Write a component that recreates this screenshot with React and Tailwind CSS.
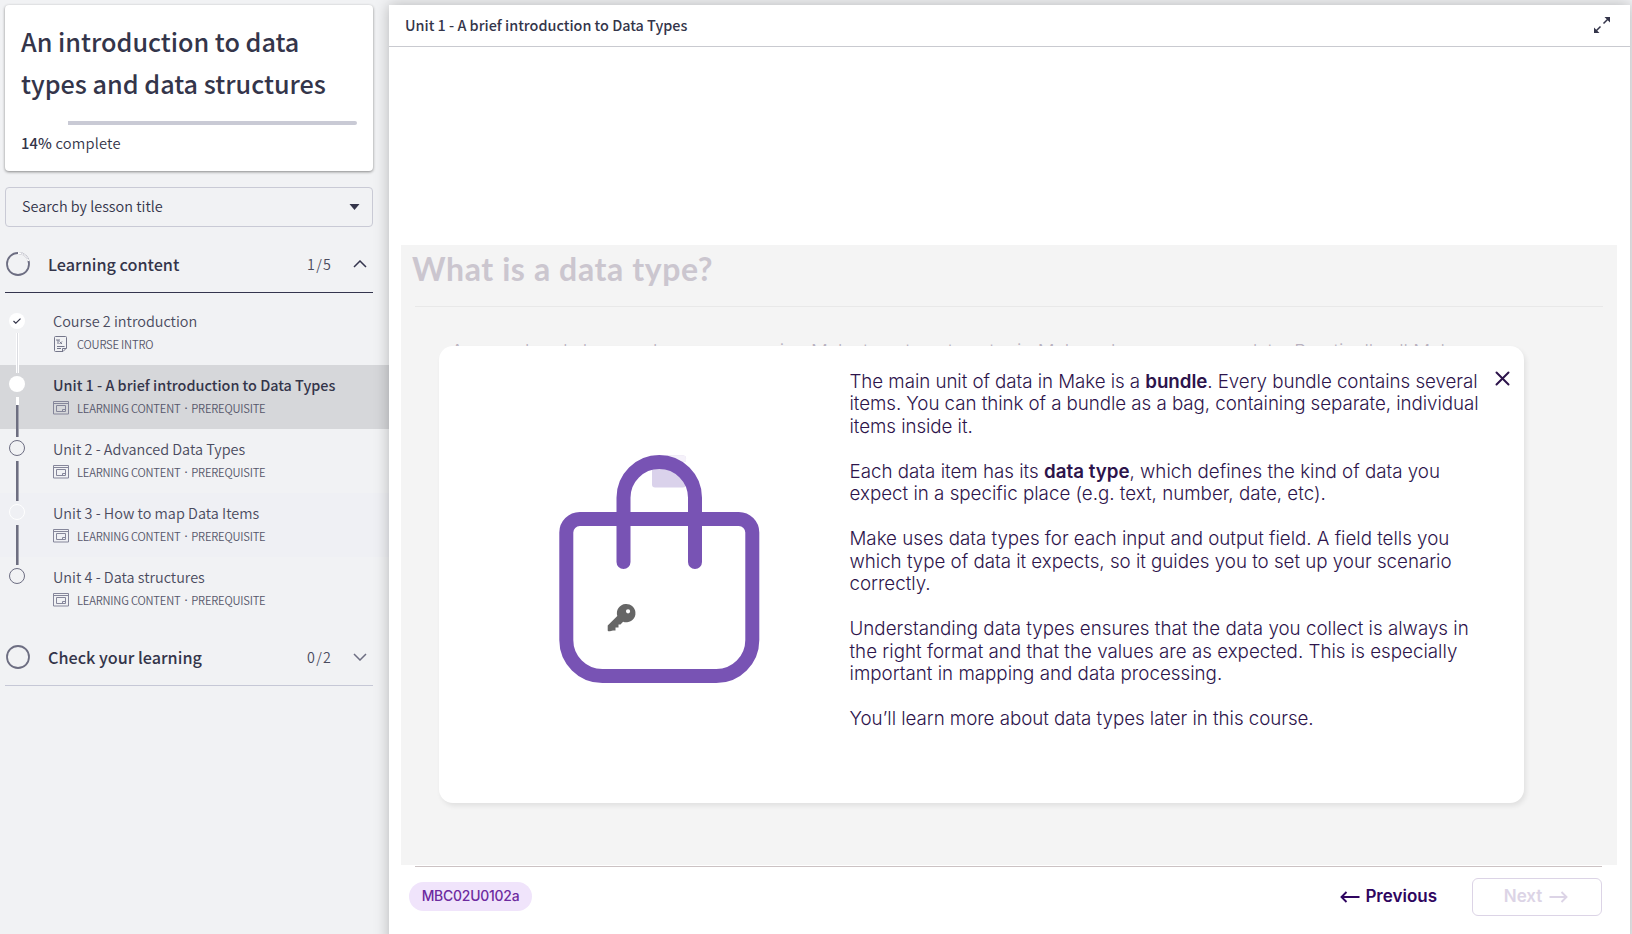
const LESSONS = [
  { title: 'Course 2 introduction', meta: ['COURSE INTRO'], state: 'done', line: 'white', icon: 'doc' },
  { title: 'Unit 1 - A brief introduction to Data Types', meta: ['LEARNING CONTENT', 'PREREQUISITE'], state: 'current', line: 'mixed', icon: 'window' },
  { title: 'Unit 2 - Advanced Data Types', meta: ['LEARNING CONTENT', 'PREREQUISITE'], state: 'open', line: 'grey', icon: 'window' },
  { title: 'Unit 3 - How to map Data Items', meta: ['LEARNING CONTENT', 'PREREQUISITE'], state: 'hover', line: 'grey', icon: 'window' },
  { title: 'Unit 4 - Data structures', meta: ['LEARNING CONTENT', 'PREREQUISITE'], state: 'open', line: 'none', icon: 'window' },
];

const ROW_BG = { done: '', current: 'bg-[#d6d7da]', open: '', hover: 'bg-[#eff0f4]' };
const DOT = {
  done: 'bg-white',
  current: 'bg-white',
  open: 'border border-[#6d6e82]',
  hover: 'border border-white',
};

function DocIcon() {
  return (
    <svg width="16" height="16" viewBox="0 0 16 16" fill="none" stroke="#75778b" strokeWidth="1">
      <path d="M2.500.5h10a1 1 0 0 1 1 1V12l-3.500 3.500H2.500a1 1 0 0 1-1-1v-13a1 1 0 0 1 1-1zM9.500 15.500V12.500h4" />
      <path d="M3 4h4M5 4v4M6.500 5.500l2.500 2.500M9 5.500L6.500 8M4 10.500h7.500M4 12.500h4" />
    </svg>
  );
}

function WindowIcon() {
  return (
    <svg width="16" height="14" viewBox="0 0 16 14" fill="none" stroke="#85869a" strokeWidth="1">
      <path d="M.5.5h15v12.500H.5zM.5 2.500h15M3.500 4.500h9v6h-9zM9.500 10.500v-2h3" />
    </svg>
  );
}

function Rail({ state, line }) {
  return (
    <div className={`relative z-10 flex w-[34px] shrink-0 flex-col items-center ${state === 'done' ? 'pt-3' : 'pt-[11px]'}`}>
      <div className={`flex size-4 shrink-0 items-center justify-center rounded-full ${DOT[state]}`}>
        {state === 'done' && (
          <svg width="8" height="6" viewBox="0 0 8 6" fill="none" stroke="#34354a" strokeWidth="1.200">
            <path d="M.5 3l2.300 2.200L7.500.6" />
          </svg>
        )}
      </div>
      {line === 'white' && <div className="mt-1 h-10 w-[3px] shrink-0 border-x border-white bg-[#dcdde2]" />}
      {line === 'mixed' && (
        <div className="mt-[5px] flex shrink-0 flex-col">
          <div className="h-2 w-[3px] bg-white" />
          <div className="h-8 w-[3px] border-r border-[#a4a5b1] bg-[#6d6e80]" />
        </div>
      )}
      {line === 'grey' && <div className="mt-[5px] h-10 w-[3px] shrink-0 border-r border-[#a4a5b1] bg-[#6d6e80]" />}
    </div>
  );
}

function Lesson({ title, meta, state, line, icon }) {
  return (
    <div className={`flex h-16 ${ROW_BG[state]}`}>
      <Rail state={state} line={line} />
      <div className="pl-[19px] pt-[9.500px]">
        <div
          className={
            state === 'current'
              ? 'text-[14.400px] leading-5 font-medium whitespace-nowrap'
              : 'text-[14.450px] leading-5 font-[350] whitespace-nowrap text-[#4a4b5e]'
          }
        >
          {title}
        </div>
        <div className="mt-[3.500px] flex h-5 items-center gap-2 text-[11.200px] font-[350] tracking-[-0.200px] text-[#55566a]">
          {icon === 'doc' ? <DocIcon /> : <WindowIcon />}
          <span className="flex gap-1 whitespace-nowrap">
            <span>{meta[0]}</span>
            {meta[1] && <span className="font-['Open_Sans',sans-serif] font-semibold">·</span>}
            {meta[1] && <span>{meta[1]}</span>}
          </span>
        </div>
      </div>
    </div>
  );
}

function Section({ label, count, open }) {
  return (
    <div className={`mx-[5px] flex h-14 items-center border-b pb-px ${open ? 'border-[#34354e]' : 'border-[#c6c8d6]'}`}>
      <svg className="ml-px" width="24" height="24" viewBox="0 0 24 24" fill="none" strokeWidth="1.800">
        <circle cx="12" cy="12" r="11" stroke="#6d6e82" />
        {open && <path d="M12 1A11 11 0 0 1 22.600 9" stroke="#fff" />}
        {open && <path d="M15 1.200A11.500 11.500 0 0 1 22.200 7.500" stroke="#b9bac6" strokeWidth=".6" />}
      </svg>
      <span className="ml-[18px] flex-1 text-[16.200px] leading-6 font-medium">{label}</span>
      <span className="mr-[21px] text-[14.300px] font-[350] tracking-[1.200px] text-[#4a4b5e]">{count}</span>
      <svg className="mr-[6px]" width="14" height="8" viewBox="0 0 14 8" fill="none" stroke={open ? '#34354e' : '#6d6e82'} strokeWidth="1.500">
        <path d={open ? 'M1 7l6-6 6 6' : 'M1 1l6 6 6-6'} />
      </svg>
    </div>
  );
}

function Sidebar() {
  return (
    <aside className="w-[389px] shrink-0 pt-[5px] text-[#34354a]">
      <div className="mx-[5px] mr-4 h-[166px] rounded bg-white px-4 pt-[15px] shadow-[0_1px_3px_rgba(0,0,0,0.450)]">
        <h1 className="text-[25.200px] leading-[42px] font-medium whitespace-nowrap">
          An introduction to data
          <br />
          types and data structures
        </h1>
        <div className="mt-[17px] flex h-1 justify-end">
          <div className="w-[289px] rounded-r-sm bg-[#c9cad5]" />
        </div>
        <p className="mt-[7.500px] text-[14.700px] leading-5 font-[350] tracking-[0.180px]">
          <span className="font-medium">14%</span> complete
        </p>
      </div>
      <div className="mr-4 ml-[5px] mt-4 flex h-10 items-center justify-between rounded border border-[#c9cad5] pr-3 pl-4 text-[14.450px] font-[350]">
        <span className="-mt-0.5">Search by lesson title</span>
        <svg width="11" height="6" viewBox="0 0 11 6" fill="#34354a">
          <path d="M.5 0h10L5.500 6z" />
        </svg>
      </div>
      <div className="mt-[10px] mr-[11px]">
        <Section label="Learning content" count="1/5" open />
      </div>
      <div className="pt-2">
        {LESSONS.map((l) => (
          <Lesson key={l.title} {...l} />
        ))}
      </div>
      <div className="mt-[9px] mr-[11px]">
        <Section label="Check your learning" count="0/2" />
      </div>
    </aside>
  );
}

function Bag() {
  return (
    <svg width="203" height="230" viewBox="0 0 203 230" fill="none">
      <rect x="94" y="1.500" width="34" height="32" rx="3" fill="#dad2eb" />
      <path d="M94 4.500a3 3 0 0 1 3-3h28a3 3 0 0 1 3 3v3h-34z" fill="#f5f1fa" />
      <path d="M118 7.500h10.500V20z" fill="#fff" />
      <path d="M21.800 65h159A13.500 13.500 0 0 1 194.300 78.500V186a36 36 0 0 1-36 36H44.300A36 36 0 0 1 8.300 186V78.500A13.500 13.500 0 0 1 21.800 65z" stroke="#7853b4" strokeWidth="14" />
      <path d="M65.500 108V43.750a35.750 35.750 0 0 1 71.500 0V108" stroke="#7853b4" strokeWidth="14" strokeLinecap="round" />
      <path
        fillRule="evenodd"
        fill="#666"
        d="M67.500 150a9.200 9.200 0 1 1-2.400 17.800l-2.600 2.700h-2v3h-3v3h-2.500L52 177.300H50.500a1 1 0 0 1-.8-1v-4.800l9.600-9.500A9.200 9.200 0 0 1 67.500 150zM70 155.200a2.100 2.100 0 1 0 .1 4.200 2.100 2.100 0 0 0-.1-4.200z"
      />
    </svg>
  );
}

function Card() {
  return (
    <div className="relative z-10 ml-[38px] flex h-[457px] w-[1085px] rounded-[14px] bg-white pt-[24px] shadow-[2px_3px_5px_rgba(0,0,0,0.080)]">
      <div className="w-[410.500px] shrink-0 pt-[83.500px] pl-[119px]">
        <Bag />
      </div>
      <div className="flex-1 pt-[0.800px] text-[18.750px] leading-[22.500px] font-light whitespace-nowrap text-[#2d144b]">
        <p className="tracking-[-0.060px]">
          The main unit of data in Make is a <b className="font-semibold">bundle</b>. Every bundle contains several
          <br />
          items. You can think of a bundle as a bag, containing separate, individual
          <br />
          items inside it.
        </p>
        <p className="mt-[22.500px]">
          Each data item has its <b className="font-semibold">data type</b>, which defines the kind of data you
          <br />
          expect in a specific place (e.g. text, number, date, etc).
        </p>
        <p className="mt-[22.500px] tracking-[-0.020px]">
          Make uses data types for each input and output field. A field tells you
          <br />
          which type of data it expects, so it guides you to set up your scenario
          <br />
          correctly.
        </p>
        <p className="mt-[22.500px] tracking-[0.010px]">
          Understanding data types ensures that the data you collect is always in
          <br />
          the right format and that the values are as expected. This is especially
          <br />
          important in mapping and data processing.
        </p>
        <p className="mt-[22.500px] tracking-[-0.050px]">You’ll learn more about data types later in this course.</p>
      </div>
      <svg className="mt-[1px] mr-[14px]" width="15" height="15" viewBox="0 0 15 15" fill="none" stroke="#2d144b" strokeWidth="2" strokeLinecap="round">
        <path d="M1.500 1.500l12 12M13.500 1.500l-12 12" />
      </svg>
    </div>
  );
}

function Slide() {
  return (
    <div className="mt-[198px] ml-3 h-[620px] w-[1216px] bg-[#f4f4f4] font-[Inter,sans-serif]">
      <h2 className="h-[61px] pt-1 pl-[11px] font-[Lato,sans-serif] text-[32px] leading-10 font-bold tracking-[0.600px] text-[#cbc6cf]">
        What is a data type?
      </h2>
      <div className="mx-[14px] border-t border-[#e8e8e8]" />
      <div className="flex h-[39px] items-end pl-[50px] text-[18.750px] leading-[20px] font-light whitespace-nowrap text-[#b9b2c0]">
        <div className="flex h-[4px]">
          <span className="w-[566px] tracking-[-0.180px]">As you already know, when you are using Make to automate acts</span>
          <span className="w-[229px]">in Make, where you move</span>
          <span>data. Practically all Make</span>
        </div>
      </div>
      <Card />
    </div>
  );
}

function Footer() {
  return (
    <footer className="mr-[28px] ml-[26px] flex h-[50px] items-end border-t border-[#cbc2c3] font-[Inter,sans-serif]">
      <span className="-ml-[6px] mb-[5px] flex h-[29px] w-[123px] items-center justify-center rounded-full bg-[#f0e4fb] text-[13.900px] font-medium tracking-[-0.200px] text-[#6d2a9f]">
        MBC02U0102a
      </span>
      <button className="mb-[1.500px] ml-auto flex h-9 items-center gap-[5px] text-[17px] font-semibold text-[#2f0560]">
        <svg width="20" height="12" viewBox="0 0 20 12" fill="none" stroke="currentColor" strokeWidth="1.900">
          <path d="M19.500 6H1.500M6.500 1L1.500 6l5 5" />
        </svg>
        Previous
      </button>
      <button className="ml-[35px] flex h-[38px] w-[130px] items-center justify-center gap-[7px] rounded-md border border-[#dcd4e6] pr-0.5 text-[17px] font-semibold text-[#dcd4e6]">
        Next
        <svg width="19" height="12" viewBox="0 0 19 12" fill="none" stroke="currentColor" strokeWidth="1.900">
          <path d="M.5 6h17M12.500 1l5 5-5 5" />
        </svg>
      </button>
    </footer>
  );
}

export default function App() {
  return (
    <div className="flex h-[934px] w-[1632px] overflow-hidden bg-[#f1f2f4] font-['Noto_Sans_CJK_SC',sans-serif]">
      <Sidebar />
      <main className="relative z-20 mt-[5px] h-[940px] w-[1241px] bg-white shadow-[0_0_14px_rgba(0,0,0,0.250)]">
        <header className="flex h-[42px] items-center justify-between border-b border-[#c9cad0] pr-5 pl-4 text-[14.400px] font-medium text-[#34354a]">
          <span className="-mt-0.5">Unit 1 - A brief introduction to Data Types</span>
          <svg className="-mt-0.5" width="16" height="16" viewBox="0 0 16 16" fill="none" stroke="#34354a" strokeWidth="1.500">
            <path d="M9.500 6.500l4.500-4.500M6.500 9.500L2 14" />
            <path d="M10.500 0H16v5.500zM0 10.500V16h5.500z" fill="#34354a" stroke="none" />
          </svg>
        </header>
        <Slide />
        <div className="mt-px">
          <Footer />
        </div>
      </main>
    </div>
  );
}
